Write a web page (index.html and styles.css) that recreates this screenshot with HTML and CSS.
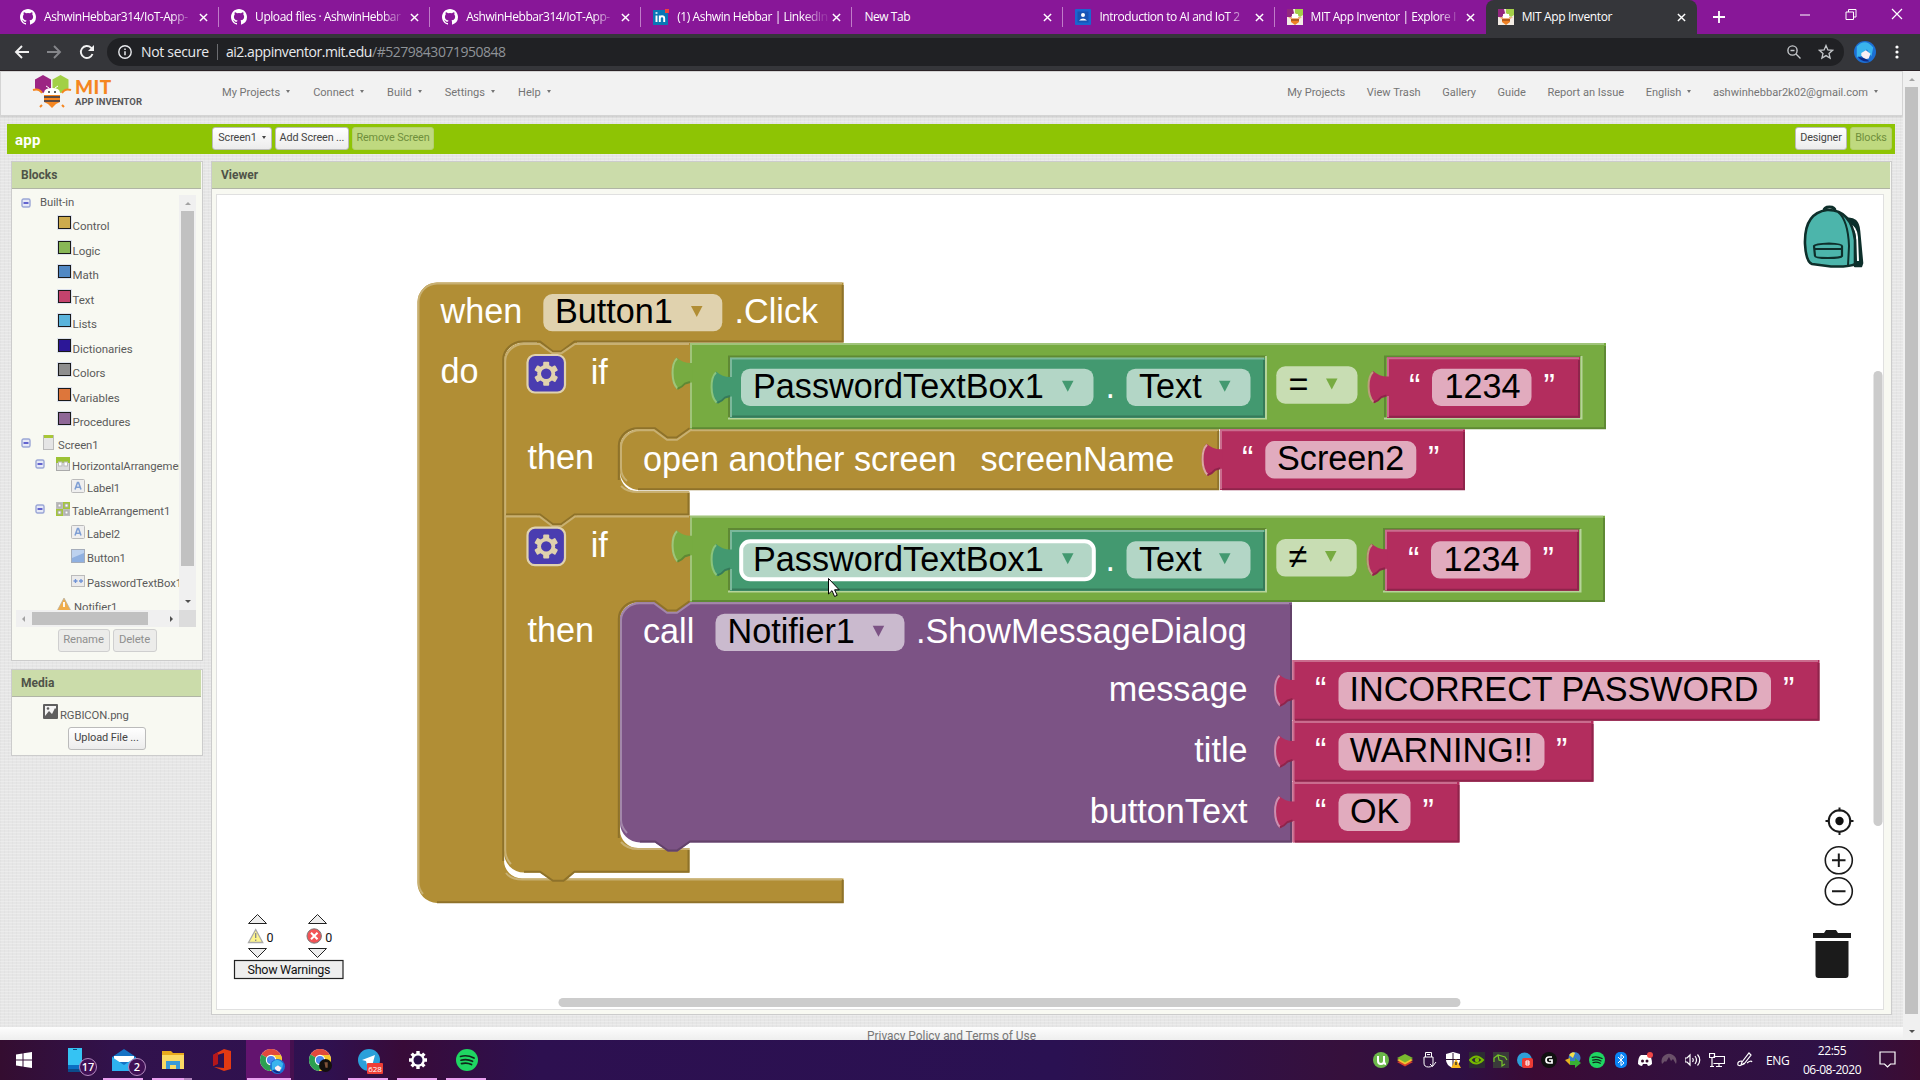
FILE: index.html
```html
<!DOCTYPE html>
<html lang="en">
<head>
<meta charset="utf-8">
<title>MIT App Inventor</title>
<link rel="stylesheet" href="styles.css">
</head>
<body>
<svg class="defs" aria-hidden="true">
  <defs>
    <symbol id="github" viewBox="0 0 16 16"><path fill="#fff" d="M8 0C3.58 0 0 3.58 0 8c0 3.54 2.29 6.53 5.47 7.59.4.07.55-.17.55-.38v-1.33c-2.22.48-2.7-1.07-2.7-1.07-.36-.92-.89-1.17-.89-1.17-.72-.5.06-.48.06-.48.8.05 1.23.82 1.23.82.71 1.22 1.87.87 2.33.66.07-.52.28-.87.5-1.07-1.77-.2-3.63-.89-3.63-3.95 0-.87.31-1.59.82-2.15-.08-.2-.36-1.02.08-2.12 0 0 .67-.21 2.2.82a7.6 7.6 0 0 1 4 0c1.53-1.04 2.2-.82 2.2-.82.44 1.1.16 1.92.08 2.12.51.56.82 1.27.82 2.15 0 3.07-1.87 3.75-3.65 3.95.29.25.54.73.54 1.48v2.19c0 .21.15.46.55.38A8 8 0 0 0 16 8c0-4.42-3.58-8-8-8z"/></symbol>
    <symbol id="cross" viewBox="0 0 10 10"><path d="M1 1l8 8M9 1l-8 8" stroke="#fff" stroke-width="1.6"/></symbol>
    <symbol id="beefav" viewBox="0 0 16 16"><rect width="16" height="16" fill="#f3ece4"/><path d="M0 0h6l1 4-3 4H0z" fill="#93277f"/><path d="M8 0h8v6l-3 2-5-4z" fill="#a3cf48"/><path d="M1 8h14l-4 3H5z" fill="#f0b080"/><path d="M5 5h6v4H5z" fill="#fff"/><path d="M4 10h8v3l-4 3-4-3z" fill="#ef8023"/><path d="M4 11h8" stroke="#7c3b16"/></symbol>
    <symbol id="minus" viewBox="0 0 10 10"><rect x="1" y="1" width="8" height="8" rx="1.5" fill="#e6e9f6" stroke="#9aa6d6" stroke-width="1.4"/><path d="M2.5 5h5" stroke="#1c1cb8" stroke-width="1.3"/></symbol>
    <symbol id="label" viewBox="0 0 14 14"><rect x=".5" y=".5" width="13" height="13" rx="1" fill="#efefef" stroke="#bbb"/><path d="M4 10.5L6.5 3.5h1L10 10.500M5 8.300h4" fill="none" stroke="#7f9fd4" stroke-width="1.6"/></symbol>
    <symbol id="chrome" viewBox="0 0 22 22"><circle cx="11" cy="11" r="11" fill="#e9e9e9"/><path d="M11 11L1.500 5.500A11 11 0 0 1 20.500 5.500z" fill="#e2493b"/><path d="M11 11L1.500 5.500A11 11 0 0 0 10 22l5-9z" fill="#2c9f51"/><path d="M11 6h9.800A11 11 0 0 1 10 22l5-9z" fill="#f8c72e"/><circle cx="11" cy="11" r="5.200" fill="#fff"/><circle cx="11" cy="11" r="4.100" fill="#4a86ee"/></symbol>
    <symbol id="spotify" viewBox="0 0 22 22"><circle cx="11" cy="11" r="11" fill="#1fd662"/><path d="M4.500 7.500Q11 5.500 18 9M5 11.200Q11 9.500 16.500 12.300M5.500 14.600Q11 13.200 15.500 15.500" fill="none" stroke="#10251a" stroke-width="1.700" stroke-linecap="round"/></symbol>
    <symbol id="anime" viewBox="0 0 24 24"><circle cx="12" cy="12" r="12" fill="#1c6fd4"/><path d="M3 6Q12-4 21 7L19 17 14 9 9 16 3 18z" fill="#39b4ee"/><path d="M8 13l5-3 5 4-2 5-4 1-4-4z" fill="#fbeff3"/><path d="M4 17q5 7 13 5l-5-3z" fill="#0e2a86"/></symbol>
    <path id="tab" d="M2.500 20H.5Q-7 20-13.500 14.500C-20 20-20 40-12.500 46.500Q-8 45-5 41L.5 39.500H2.500z"/>
    <path id="tabedge" d="M-13 15.500C-19 21-19 39-12.500 45.500" fill="none" stroke-width="2"/>
    <path id="tabdark" d="M-12.500 45.800Q-8 44.300-5 40.500L0 39" fill="none" stroke-width="2"/>
    <path id="arrow" d="M0 0h11.500L5.750 11z"/>
    <g id="gear"><rect x="1" y="1" width="37.500" height="37.500" rx="7.500" fill="#4a3db0" stroke="#e0d2ae" stroke-width="2.200"/><g transform="translate(19.700 19.700)" fill="#e0d2ae"><circle r="9"/><rect x="-3" y="-12" width="6" height="24" rx="1"/><rect x="-3" y="-12" width="6" height="24" rx="1" transform="rotate(60)"/><rect x="-3" y="-12" width="6" height="24" rx="1" transform="rotate(120)"/><circle r="5.200" fill="#4a3db0"/></g></g>
  </defs>
</svg>

<div class="tabstrip">
  <div class="tab"><svg class="fav"><use href="#github"/></svg><span class="title fade">AshwinHebbar314/IoT-App-</span><svg class="x"><use href="#cross"/></svg></div>
  <div class="tab"><svg class="fav"><use href="#github"/></svg><span class="title fade">Upload files · AshwinHebbar</span><svg class="x"><use href="#cross"/></svg></div>
  <div class="tab"><svg class="fav"><use href="#github"/></svg><span class="title fade">AshwinHebbar314/IoT-App-</span><svg class="x"><use href="#cross"/></svg></div>
  <div class="tab"><svg class="fav" viewBox="0 0 16 16"><rect y="1" width="15" height="15" fill="#0a77b5"/><path d="M3.500 6.500v6.500M3.500 3.200v1.600M6.800 13V6.500M6.800 9.500q0-2.200 2.200-2.200t2.200 2.200V13" fill="none" stroke="#fff" stroke-width="1.900"/><rect x="12" width="4" height="4" fill="#f0443c"/></svg><span class="title fade">(1) Ashwin Hebbar | LinkedIn</span><svg class="x"><use href="#cross"/></svg></div>
  <div class="tab"><span class="title">New Tab</span><svg class="x"><use href="#cross"/></svg></div>
  <div class="tab"><svg class="fav" viewBox="0 0 16 16"><rect width="16" height="16" rx="1" fill="#1a66d0"/><rect x="2.500" y="2.500" width="11" height="11" fill="#1853b4"/><circle cx="8" cy="6" r="2" fill="#fff"/><path d="M4 11.500q4-4 8 0z" fill="#fff"/></svg><span class="title fade">Introduction to AI and IoT 2</span><svg class="x"><use href="#cross"/></svg></div>
  <div class="tab last"><svg class="fav"><use href="#beefav"/></svg><span class="title fade">MIT App Inventor | Explore I</span><svg class="x"><use href="#cross"/></svg></div>
  <div class="tab active"><svg class="fav"><use href="#beefav"/></svg><span class="title">MIT App Inventor</span><svg class="x"><use href="#cross"/></svg></div>
  <svg class="newtab" viewBox="0 0 12 12"><path d="M6 0v12M0 6h12" stroke="#fff" stroke-width="1.800"/></svg>
  <div class="winbtns">
    <svg viewBox="0 0 12 12"><path d="M1 7h10" stroke="#fff"/></svg>
    <svg viewBox="0 0 12 12"><path d="M1 4h7.500v7.500H1zM3.500 4V1.500H11V9H8.500" fill="none" stroke="#fff"/></svg>
    <svg viewBox="0 0 12 12"><path d="M1 1l10 10M11 1L1 11" stroke="#fff" stroke-width="1.200"/></svg>
  </div>
</div>

<div class="toolbar">
  <svg class="nav" viewBox="0 0 16 16"><path d="M15 8H2M8 2L2 8l6 6" fill="none" stroke="#f1f1f1" stroke-width="1.900"/></svg>
  <svg class="nav" viewBox="0 0 16 16"><path d="M1 8h13M8 2l6 6-6 6" fill="none" stroke="#85868a" stroke-width="1.900"/></svg>
  <svg class="nav" viewBox="0 0 16 16"><path d="M13.500 10A6 6 0 1 1 12 3.600L14 6" fill="none" stroke="#f1f1f1" stroke-width="1.900"/><path d="M15 1v6H9z" fill="#f1f1f1"/></svg>
  <div class="omnibox">
    <svg class="info" viewBox="0 0 14 14"><circle cx="7" cy="7" r="6.200" fill="none" stroke="#e8eaed" stroke-width="1.400"/><path d="M7 6.200v4M7 3.500v1.500" stroke="#e8eaed" stroke-width="1.500"/></svg>
    <span class="secure">Not secure</span><i class="bar"></i><span class="url">ai2.appinventor.mit.edu<em>/#5279843071950848</em></span>
    <svg class="zoomi" viewBox="0 0 14 14"><circle cx="5.500" cy="5.500" r="4.600" fill="none" stroke="#c4c7ca" stroke-width="1.400"/><path d="M9 9l4.500 4.500M3.500 5.500h4" stroke="#c4c7ca" stroke-width="1.400"/></svg>
    <svg class="star" viewBox="0 0 16 16"><path d="M8 1.500l1.900 4.400 4.700.4-3.600 3.100 1.100 4.700L8 11.600l-4.100 2.500L5 9.400 1.400 6.300l4.700-.4z" fill="none" stroke="#c4c7ca" stroke-width="1.300"/></svg>
  </div>
  <svg class="avatar"><use href="#anime"/></svg>
  <svg class="dots" viewBox="0 0 4 16"><g fill="#fff"><circle cx="2" cy="3" r="1.600"/><circle cx="2" cy="8" r="1.600"/><circle cx="2" cy="13" r="1.600"/></g></svg>
</div>

<div class="view">
  <div class="page">
    <div class="header">
      <div class="logo">
        <svg viewBox="0 0 40 34"><path d="M11 0l8 4.500v9L11 18l-8-4.500v-9z" fill="#9c2583"/><path d="M28.500 0l8 4.500v9l-8 4.500-8-4.500v-9z" fill="#a2d046"/><path d="M1 15q6-2 9 3M39 15q-6-2-9 3M10 30l-2 2M30 30l2 2" fill="none" stroke="#f58620" stroke-width="2"/><path d="M12 18q0-5 8-5t8 5v3H12z" fill="#fff"/><path d="M12 20h16v7l-4 2-4 4-4-4-4-2z" fill="#f58620"/><path d="M12 22h16M12 26h16" stroke="#5d4b45" stroke-width="1.800"/><circle cx="17" cy="17" r="1" fill="#333"/><circle cx="23" cy="17" r="1" fill="#333"/><path d="M17 13l-3-2M23 13l3-2" stroke="#fff"/></svg>
        <div class="logotext"><b>MIT</b><span>APP INVENTOR</span></div>
      </div>
      <div class="menu">
        <span class="dd">My Projects</span><span class="dd">Connect</span><span class="dd">Build</span><span class="dd">Settings</span><span class="dd">Help</span>
      </div>
      <div class="menu right">
        <span>My Projects</span><span>View Trash</span><span>Gallery</span><span>Guide</span><span>Report an Issue</span><span class="dd">English</span><span class="dd">ashwinhebbar2k02@gmail.com</span>
      </div>
    </div>

    <div class="project">
      <b>app</b>
      <div class="btn dd w60">Screen1</div><div class="btn w74">Add Screen ...</div><div class="btn off w82">Remove Screen</div>
      <div class="grow"></div>
      <div class="btn w52">Designer</div><div class="btn off w42">Blocks</div>
    </div>

    <div class="main">
      <div class="side">
        <div class="panel blocks">
          <div class="phead">Blocks</div>
          <div class="treebox">
            <div class="tree">
              <div class="row top"><svg class="tg"><use href="#minus"/></svg><span>Built-in</span></div>
              <div class="row cat"><i class="c1"></i><span>Control</span></div>
              <div class="row cat"><i class="c2"></i><span>Logic</span></div>
              <div class="row cat"><i class="c3"></i><span>Math</span></div>
              <div class="row cat"><i class="c4"></i><span>Text</span></div>
              <div class="row cat"><i class="c5"></i><span>Lists</span></div>
              <div class="row cat"><i class="c6"></i><span>Dictionaries</span></div>
              <div class="row cat"><i class="c7"></i><span>Colors</span></div>
              <div class="row cat"><i class="c8"></i><span>Variables</span></div>
              <div class="row cat"><i class="c9"></i><span>Procedures</span></div>
              <div class="row scr"><svg class="tg"><use href="#minus"/></svg><svg class="ic s" viewBox="0 0 11 15"><rect x=".5" y=".5" width="10" height="14" fill="#e5e5e5" stroke="#bbb"/><rect x="1" y="0" width="9" height="3" fill="#a8c736"/></svg><span>Screen1</span></div>
              <div class="row arr"><svg class="tg"><use href="#minus"/></svg><svg class="ic" viewBox="0 0 14 14"><rect x=".5" y=".5" width="13" height="13" fill="#ddd" stroke="#aaa"/><rect width="14" height="6" fill="#9cc233"/><rect x="2.500" y="5" width="3.500" height="4" fill="#fff" stroke="#bbb"/><rect x="8" y="5" width="3.500" height="4" fill="#fff" stroke="#bbb"/></svg><span>HorizontalArrangement1</span></div>
              <div class="row leaf l1"><svg class="ic"><use href="#label"/></svg><span>Label1</span></div>
              <div class="row arr l2"><svg class="tg"><use href="#minus"/></svg><svg class="ic" viewBox="0 0 14 14"><rect width="14" height="14" fill="#bdbdbd"/><path d="M7 0h7v7H7zM0 7h7v7H0z" fill="#a5c63b"/><g fill="#fff" stroke="#aaa"><rect x="2" y="2" width="3" height="3"/><rect x="9" y="2" width="3" height="3"/><rect x="2" y="9" width="3" height="3"/><rect x="9" y="9" width="3" height="3"/></g></svg><span>TableArrangement1</span></div>
              <div class="row leaf l3"><svg class="ic"><use href="#label"/></svg><span>Label2</span></div>
              <div class="row leaf l4"><svg class="ic" viewBox="0 0 14 14"><rect x=".5" y=".5" width="13" height="13" fill="#8fb0e0" stroke="#a5adba"/><path d="M1 1h12v3L1 9z" fill="#bdd2ef"/></svg><span>Button1</span></div>
              <div class="row leaf l5"><svg class="ic p" viewBox="0 0 14 12"><rect x=".5" y=".5" width="13" height="11" fill="#ebebeb" stroke="#bbb"/><path d="M2.500 6h4M4.500 4v4M8 6h4M10 4v4" stroke="#6f93d6" stroke-width="1.300"/></svg><span>PasswordTextBox1</span></div>
              <div class="row note"><svg class="ic" viewBox="0 0 14 14"><path d="M7 0l7 13H0z" fill="#f0ad4a" stroke="#b9b1a2" stroke-width=".8"/><path d="M7 4v5" stroke="#fff" stroke-width="1.800"/></svg><span>Notifier1</span></div>
            </div>
            <div class="vs"><i class="up"></i><i class="thumb"></i><i class="down"></i></div>
            <div class="hs"><i class="lf"></i><i class="thumb"></i><i class="rt"></i></div>
            <div class="corner"></div>
          </div>
          <div class="acts"><div class="btn off w52">Rename</div><div class="btn off w44">Delete</div></div>
        </div>
        <div class="panel media">
          <div class="phead">Media</div>
          <div class="file"><svg viewBox="0 0 15 15"><rect width="15" height="15" rx="1" fill="#5f5f5f"/><path d="M2 2h11v11H2z" fill="#f4f4f4"/><path d="M2 12l4-5 3 3 3-6 1 1v8H2z" fill="#5f5f5f"/><circle cx="5" cy="4.500" r="1.300" fill="#5f5f5f"/></svg><span>RGBICON.png</span></div>
          <div class="btn w78">Upload File ...</div>
        </div>
      </div>

      <div class="panel viewer">
        <div class="phead">Viewer</div>
        <div class="workspace">
          <svg class="canvas" viewBox="217 195 1666 814" width="1666" height="814">
            <!-- event block -->
            <path fill="#b18e35" d="M417.500 302A20 19.500 0 0 1 437 282.500H843.500V342.500H577V354H537V342.500H524A20 18 0 0 0 504 361V860A18 18 0 0 0 522 878.500H843.500V903H437A20 20 0 0 1 417.500 883z"/>
            <path class="hi gl" d="M423 894Q418.500 889 418.500 882V302A19 18.500 0 0 1 437 283.500H842M506 873Q511 879.500 522 879.500H842"/>
            <path class="hi gd" d="M842.700 285V341.600H574.500L561 351.500H553L540 341.600H523A19.500 18 0 0 0 503.200 360V861M842.700 880V902.200H437"/>
            <!-- first if -->
            <path fill="#b18e35" d="M504 361A20 18 0 0 1 524 343H540L553 352.500H561L574.500 343H690V442H654V429H640A20 18 0 0 0 620 447V474A18 18 0 0 0 638 491.500H689.500V515.500H577V528H537V515.500H504z"/>
            <path class="hi gl" d="M505.200 515V361A19 17.500 0 0 1 524 344H539.500L552.500 353.200H561.500L575 344H689M621 486Q627 492 638 492H689"/>
            <path class="hi gd" d="M688.500 493V514.500H574.500L561 524.200H553L540 514.500H506M618.800 480V447A19 18 0 0 1 640 428.300H655L667.500 437.500H676.500L689.500 428.300"/>
            <!-- second if -->
            <path fill="#b18e35" d="M504 515.500H540L553 525.500H561L574.500 515.500H690V615H654V602H640A20 18 0 0 0 620 620V830A18 18 0 0 0 638 848H689.500V872.500H574.500L565 881.500H553L540 872.500H524A20 20 0 0 1 504 852z"/>
            <path class="hi gl" d="M511 864Q505.200 858 505.200 850V516.500H539.500L552.500 526.200H561.500L575 516.500H689M621 842Q627 849 638 849H689"/>
            <path class="hi gd" d="M688.500 850V871.700H574.500L563.500 880.700H553L540 871.700H524M618.800 838V620A19 18 0 0 1 640 601.300H655L667.500 610.500H676.500L689.500 601.300"/>

            <!-- open another screen -->
            <path fill="#b18e35" d="M620 447A20 18 0 0 1 640 429.300H654.500L667.500 439H676.500L690 429.300H1219V490H640A20 19 0 0 1 620 472z"/>
            <path class="hi gl" d="M627 481Q621 476 621 468V447A19 17 0 0 1 640 430.300H654L667 439.800H677L690.500 430.300H1218"/>
            <path class="hi gd" d="M1218.300 431V489.200H638"/>

            <!-- comparison 1 -->
            <g><path fill="#77ab41" d="M690 343H1606V429H690z"/>
            <path class="hi nl" d="M691 428V344H1604"/><path class="hi nd" d="M1605 346V428.200H692"/><use href="#tab" x="690" y="343" fill="#77ab41"/><use href="#tabedge" x="690" y="343" stroke="#a0c47a"/><use href="#tabdark" x="690" y="343" stroke="#5f8934"/></g>
            <g><path fill="none" stroke="#5f8934" stroke-width="2" d="M729 418V356.500H1266"/><path fill="none" stroke="#b6d49a" stroke-width="2" d="M728 418.500H1266V356"/>
            <rect x="730" y="358" width="535" height="60" fill="#439970"/><path class="hi tl" d="M731 417V358.500H1264"/><path class="hi td" d="M1264 360V416.500H732"/><use href="#tab" x="729.500" y="357" fill="#439970"/><use href="#tabedge" x="729" y="357" stroke="#8cc47c"/><use href="#tabdark" x="730" y="357" stroke="#367a5a"/></g>
            <rect class="f" x="741" y="368.700" width="352.500" height="37.300" rx="9"/><rect class="f" x="1126.500" y="368.700" width="124" height="37.300" rx="9"/><rect class="f" x="1276.300" y="366.300" width="81.200" height="37.400" rx="9"/>
            <g><path fill="none" stroke="#5f8934" stroke-width="2" d="M1385 418V356.500H1581"/><path fill="none" stroke="#b6d49a" stroke-width="2" d="M1384 418.500H1581.500V356"/>
            <rect x="1387" y="357" width="193" height="61" fill="#b32d5e"/><path class="hi rl" d="M1388 417V358.200H1579"/><path class="hi rd" d="M1579 360V416.800H1389"/><use href="#tab" x="1386.500" y="356.500" fill="#b32d5e"/><use href="#tabedge" x="1386" y="356.500" stroke="#b9a07a"/><use href="#tabdark" x="1386.500" y="356.500" stroke="#8f244b"/></g>
            <rect class="f" x="1432" y="368.700" width="99.500" height="37.300" rx="9"/>

            <!-- comparison 2 -->
            <g><path fill="#77ab41" d="M690 515.700H1605V602H690z"/>
            <path class="hi nl" d="M691 601V516.700H1603"/><path class="hi nd" d="M1604 518V601H692"/><use href="#tab" x="690" y="515.700" fill="#77ab41"/><use href="#tabedge" x="690" y="515.700" stroke="#a0c47a"/><use href="#tabdark" x="690" y="515.700" stroke="#5f8934"/></g>
            <g><path fill="none" stroke="#5f8934" stroke-width="2" d="M729 591V529H1266"/><path fill="none" stroke="#b6d49a" stroke-width="2" d="M728 591.500H1266V529"/>
            <rect x="730" y="530" width="535" height="61" fill="#439970"/><path class="hi tl" d="M731 590V531H1264"/><path class="hi td" d="M1264 532V589.500H732"/><use href="#tab" x="729.500" y="529.500" fill="#439970"/><use href="#tabedge" x="729" y="529.500" stroke="#8cc47c"/><use href="#tabdark" x="730" y="529.500" stroke="#367a5a"/></g>
            <rect class="f" x="741" y="541.300" width="352.500" height="37.300" rx="9"/><rect x="741.200" y="541.200" width="352.600" height="38" rx="9" fill="none" stroke="#fff" stroke-width="4"/><rect class="f" x="1126.500" y="541.300" width="124" height="37.300" rx="9"/><rect class="f" x="1276.300" y="539" width="80.400" height="37.600" rx="9"/>
            <g><path fill="none" stroke="#5f8934" stroke-width="2" d="M1384 591V529H1580"/><path fill="none" stroke="#b6d49a" stroke-width="2" d="M1383 591.500H1580.500V529"/>
            <rect x="1385" y="529.700" width="194" height="61" fill="#b32d5e"/><path class="hi rl" d="M1386 590V530.700H1578"/><path class="hi rd" d="M1578 532V589.700H1387"/><use href="#tab" x="1385" y="529.200" fill="#b32d5e"/><use href="#tabedge" x="1385" y="529.200" stroke="#b9a07a"/><use href="#tabdark" x="1385" y="529.200" stroke="#8f244b"/></g>
            <rect class="f" x="1431" y="541.300" width="99.500" height="37.300" rx="9"/>

            <!-- procedure call -->
            <path fill="#7c5385" d="M620 620A20 18 0 0 1 640 602.300H654.500L667.500 612H676.500L690 602.300H1292V842.500H690L677.500 851.500H668L655 842.500H640A20 20 0 0 1 620 823z"/>
            <path class="hi pl" d="M627 833Q621 827 621 820V620A19 17 0 0 1 640 603.300H654L667 612.800H677L690.500 603.300H1289"/>
            <path class="hi pd" d="M1291 605V841.500H690L677 850.500H668L655 841.500H640"/>
            <rect class="f" x="715.500" y="613.700" width="189" height="37.300" rx="9"/>

            <!-- text values -->
            <g><rect x="1220" y="429.300" width="245" height="60.700" fill="#b32d5e"/><path class="hi rl" d="M1221 489V430.300H1463"/><path class="hi rd" d="M1464 432V489.200H1222"/><use href="#tab" x="1220" y="429.300" fill="#b32d5e"/><use href="#tabedge" x="1220" y="429.300" stroke="#d8a9a0"/><use href="#tabdark" x="1220" y="429.300" stroke="#8f244b"/><rect class="f" x="1265.300" y="441" width="151" height="37.500" rx="9"/></g>
            <g><rect x="1292.500" y="660" width="527" height="60.700" fill="#b32d5e"/><path class="hi rl" d="M1293.500 720V661H1818"/><path class="hi rd" d="M1818.500 663V719.800H1295"/><use href="#tab" x="1292.500" y="660" fill="#b32d5e"/><use href="#tabedge" x="1292.500" y="660" stroke="#ca8fb0"/><use href="#tabdark" x="1292.500" y="660" stroke="#8f244b"/><rect class="f" x="1338.500" y="672" width="432.500" height="37.500" rx="9"/></g>
            <g><rect x="1292.500" y="721" width="301" height="60.700" fill="#b32d5e"/><path class="hi rl" d="M1293.500 781V722H1591"/><path class="hi rd" d="M1592.500 724V780.800H1295"/><use href="#tab" x="1292.500" y="721" fill="#b32d5e"/><use href="#tabedge" x="1292.500" y="721" stroke="#ca8fb0"/><use href="#tabdark" x="1292.500" y="721" stroke="#8f244b"/><rect class="f" x="1338.500" y="733" width="206" height="37.500" rx="9"/></g>
            <g><rect x="1292.500" y="782" width="167" height="60.500" fill="#b32d5e"/><path class="hi rl" d="M1293.500 842V783H1457"/><path class="hi rd" d="M1458.500 785V841.500H1295"/><use href="#tab" x="1292.500" y="781.500" fill="#b32d5e"/><use href="#tabedge" x="1292.500" y="781.500" stroke="#ca8fb0"/><use href="#tabdark" x="1292.500" y="781.500" stroke="#8f244b"/><rect class="f" x="1338.500" y="793.500" width="72" height="37.500" rx="9"/></g>
            <rect class="f" x="543.300" y="294" width="179" height="37.300" rx="9"/>

            <use href="#gear" x="526.500" y="354"/><use href="#gear" x="526.500" y="526.700"/>

            <g fill="#b18e35"><use href="#arrow" x="691" y="306"/></g>
            <g fill="#439970"><use href="#arrow" x="1062" y="380.700"/><use href="#arrow" x="1219" y="380.700"/><use href="#arrow" x="1062" y="553.300"/><use href="#arrow" x="1219" y="553.300"/></g>
            <g fill="#77ab41"><use href="#arrow" x="1326" y="378.500"/><use href="#arrow" x="1325" y="551"/></g>
            <g fill="#7c5385"><use href="#arrow" x="872.700" y="625.700"/></g>

            <g class="w">
              <text x="440.500" y="323">when</text><text x="734.500" y="323">.Click</text><text x="440.500" y="382.500">do</text>
              <text x="590.700" y="384">if</text><text x="527.500" y="469">then</text><text x="590.700" y="557">if</text><text x="527.500" y="641.700">then</text>
              <text x="643" y="470.500">open another screen</text><text x="980.500" y="470.500">screenName</text>
              <text x="1105.500" y="398">.</text><text x="1105.500" y="570.700">.</text>
              <text x="643" y="643.300">call</text><text x="916" y="643.300">.ShowMessageDialog</text>
              <g text-anchor="end"><text x="1247.500" y="701">message</text><text x="1247.500" y="762">title</text><text x="1247.500" y="822.500">buttonText</text></g>
              <text x="1409" y="398">“</text><text x="1543.500" y="398">”</text>
              <text x="1408" y="571">“</text><text x="1542.500" y="571">”</text>
              <text x="1242" y="470">“</text><text x="1428" y="470">”</text>
              <text x="1315" y="701">“</text><text x="1783" y="701">”</text>
              <text x="1315" y="762">“</text><text x="1556" y="762">”</text>
              <text x="1315" y="822.700">“</text><text x="1422.500" y="822.700">”</text>
            </g>
            <g class="k">
              <text x="555" y="323">Button1</text>
              <text x="753" y="398">PasswordTextBox1</text><text x="1139" y="398">Text</text><text x="1288.500" y="396">=</text><text x="1444.500" y="398">1234</text>
              <text x="753" y="570.700">PasswordTextBox1</text><text x="1139" y="570.700">Text</text><text x="1288.500" y="568">≠</text><text x="1443.500" y="570.700">1234</text>
              <text x="1277" y="470">Screen2</text><text x="727.500" y="643.300">Notifier1</text>
              <text x="1349.500" y="701">INCORRECT PASSWORD</text><text x="1349.800" y="762">WARNING!!</text><text x="1350" y="822.700">OK</text>
            </g>

            <!-- pointer -->
            <path d="M828.500 578.500v15.500l3.500-3.300 2.600 5.800 2.600-1.200-2.600-5.500h4.600z" fill="#fff" stroke="#000" stroke-width="1"/>

            <!-- backpack -->
            <g stroke="#0e2f2b" stroke-width="2.600" stroke-linejoin="round"><path d="M1846 219q12-2 13 12l3 32-1 3h-6l-3-38z" fill="#08302c"/><path d="M1850 225q6 2 7 12l1 24" fill="none" stroke="#fff" stroke-width="2"/><path d="M1824 211q0-4 5.500-4t5.500 4" fill="none" stroke-width="3"/><path d="M1812 264q-6-2-7-20-1-31 22-34 24-1 28 30l0 24q-4 3-24 2.500z" fill="#4cb5ab"/><path d="M1838 212q10 8 11 34l-1 20" fill="none" stroke-width="2"/><path d="M1814 246q1-2 15-2.500 13 .500 13 2.500v10q-1 2-14 2t-13-2zM1814 249h28" fill="none" stroke-width="2.200"/></g>
            <!-- zoom controls -->
            <g fill="none" stroke="#1a1a1a" stroke-width="2"><circle cx="1839.500" cy="821" r="10.800"/><path d="M1839.500 807.500v4M1839.500 831v4M1825.500 821h4M1849.500 821h4"/><circle cx="1839.500" cy="821" r="4.200" fill="#111" stroke="none"/><circle cx="1838.800" cy="860.300" r="13.500" stroke-width="1.600"/><circle cx="1838.800" cy="891.300" r="13.500" stroke-width="1.600"/><path d="M1832 860.300h13.500M1838.800 853.500V867M1832 891.300h13.500"/></g>
            <path d="M1813 938v-5h11l2-3h10l2 3h13v5zM1815.500 941H1848.500V975q0 3-3 3h-27q-3 0-3-3z" fill="#1b1b1b"/>
            <!-- workspace scrollbars -->
            <rect x="558.500" y="998" width="902" height="9" rx="4.500" fill="#ccc"/><rect x="1873.500" y="371" width="9" height="455" rx="4.500" fill="#ccc"/>
            <!-- warning indicator -->
            <g fill="#eee" stroke="#222"><path d="M248.500 923.500l9-9 9 9zM308.500 923.500l9-9 9 9zM248.500 948.500h18l-9 9zM308.500 948.500h18l-9 9z"/><rect x="234.500" y="960.500" width="108.500" height="18" stroke-width="1.200"/></g>
            <path d="M255.700 929.500l7 13h-14.200z" fill="#fdf58e" stroke="#aaa" stroke-width="1.300"/><path d="M255.700 933v5M255.700 939.500v1.500" stroke="#888" stroke-width="1.300"/>
            <circle cx="314.200" cy="936" r="7.200" fill="#f35457" stroke="#777"/><path d="M311 932.700l6.500 6.500M317.500 932.700l-6.500 6.500" stroke="#fff" stroke-width="2"/>
            <g class="wi"><text x="266.500" y="942">0</text><text x="325.300" y="942">0</text><text x="247.500" y="973.500" textLength="83">Show Warnings</text></g>
          </svg>
        </div>
      </div>
    </div>
    <div class="footer">Privacy Policy and Terms of Use</div>
  </div>
  <div class="pagescroll"><i class="up"></i><i class="thumb"></i><i class="down"></i></div>
</div>

<div class="taskbar">
  <div class="cell start"><svg viewBox="0 0 16 16" width="16" height="16"><path d="M0 2.500l6.500-1v6H0zM7.500 1.300L16 0v7.500H7.500zM0 8.500h6.500v6L0 13.600zM7.500 8.500H16V16l-8.500-1.200z" fill="#fff"/></svg></div>
  <div class="cell"><svg viewBox="0 0 14 24" width="14" height="24"><rect width="14" height="24" fill="#35c3f3"/><rect y="17" width="14" height="7" fill="#0a6fc2"/><rect y="21" width="14" height="3" fill="#0b4c8c"/><path d="M5 1.500h4" stroke="#0a4f80"/></svg><span class="badge">17</span></div>
  <div class="cell run"><svg viewBox="0 0 24 22" width="24" height="22"><path d="M0 8L12 0l12 8v14H0z" fill="#1572c4"/><path d="M2 7h20v6H2z" fill="#fff"/><path d="M0 8l12 8L24 8v14H0z" fill="#2eb2f0"/></svg><span class="badge">2</span></div>
  <div class="cell run multi"><svg viewBox="0 0 22 18" width="22" height="18"><path d="M0 0h9l2 2h11v16H0z" fill="#e9a91d"/><path d="M0 4h22v14H0z" fill="#fbd964"/><path d="M4 18v-8h14v8h-4v-4H8v4z" fill="#3b9ad9"/></svg></div>
  <div class="cell"><svg viewBox="0 0 18 22" width="18" height="22"><path d="M0 6l11-6 7 2v18l-7 2-10-4 10 1V4L4 6v9l-4 2z" fill="#e43a13"/><path d="M0 6l5-3v12l-5 2z" fill="#b5171c"/></svg></div>
  <div class="cell run on"><svg width="22" height="22"><use href="#chrome"/></svg><svg class="mini" width="15" height="15"><use href="#anime"/></svg></div>
  <div class="cell"><svg width="22" height="22"><use href="#chrome"/></svg><svg class="mini" width="13" height="13" viewBox="0 0 12 12"><circle cx="6" cy="6" r="6" fill="#14100e"/><path d="M5 3h3v5H6z" fill="#80533a"/></svg></div>
  <div class="cell run"><svg viewBox="0 0 22 22" width="22" height="22"><circle cx="11" cy="11" r="11" fill="#2ba0da"/><path d="M4 11l13-5-3 11-4-3-1 2-1-4z" fill="#fff"/></svg><span class="red">628</span></div>
  <div class="cell run"><svg viewBox="-10 -10 20 20" width="20" height="20"><g fill="#fff"><circle r="6.800"/><path d="M-1.700-9h3.400V9h-3.400zM-9-1.700H9v3.400H-9z"/><path d="M-1.700-9h3.400V9h-3.400zM-9-1.700H9v3.400H-9z" transform="rotate(45)"/></g><circle r="4.500" fill="#2b1048"/></svg></div>
  <div class="cell run"><svg width="22" height="22"><use href="#spotify"/></svg></div>
  <div class="tray">
    <div><svg viewBox="0 0 16 16"><circle cx="8" cy="8" r="8" fill="#6cb64a"/><path d="M5 4v5q0 3 3 3t3-3V4M11 9q0 3 2 3" fill="none" stroke="#fff" stroke-width="2"/></svg></div>
    <div><svg viewBox="0 0 16 16"><path d="M0 10l8 4.500 8-4.500-8-3z" fill="#d8402c"/><path d="M0 8l8 4.500L16 8 8 4z" fill="#f4c52e"/><path d="M0 6l8 4.500L16 6 8 2z" fill="#79b82f"/></svg></div>
    <div><svg viewBox="0 0 16 16"><path d="M4.500 5V.500h6V5M3 5h9v6q0 4-4.500 4T3 11zM6 2.500h3M9 12l2.500 2.500L15 10" fill="none" stroke="#fff"/></svg></div>
    <div><svg viewBox="0 0 16 16"><path d="M8 0l7 2v6q0 5-7 8-7-3-7-8V2z" fill="#fff"/><path d="M8 1v14M1 7.500h14" stroke="#2b1030"/><path d="M11 7l5 9H6z" fill="#f9b51d"/><path d="M11 10v3" stroke="#222" stroke-width="1.300"/></svg></div>
    <div><svg viewBox="0 0 16 16"><rect width="16" height="16" fill="#2c2c32"/><path d="M1 8q6-7 13 0-7 7-13 0z" fill="none" stroke="#76b900" stroke-width="2"/><circle cx="8" cy="8" r="2.200" fill="#76b900"/></svg></div>
    <div><svg viewBox="0 0 16 16"><rect width="16" height="16" fill="#3a3a3a"/><path d="M1 10V6l4-3 7 2 2 3M5 3l1 5 3 1v5l3-2" fill="none" stroke="#77c52b" stroke-width="1.200"/></svg></div>
    <div><svg viewBox="0 0 16 16"><circle cx="7.500" cy="8" r="7.500" fill="#2e9fd8"/><rect x="5" y="6" width="11" height="10" rx="2" fill="#eb3b34"/><path d="M9 9h3v4H9zM9 11h3" fill="none" stroke="#fff"/></svg></div>
    <div><svg viewBox="0 0 16 16"><circle cx="8" cy="8" r="8" fill="#111"/><path d="M11 5H8Q5 5 5 8t3 3h3V8H8" fill="none" stroke="#fff" stroke-width="1.700"/></svg></div>
    <div><svg viewBox="0 0 16 16"><circle cx="9.500" cy="6" r="6" fill="#3a7fc9"/><path d="M4 3Q7-1 10 1l-2 5z" fill="#f5e04a"/><path d="M5 9l5 0V6l6 5-6 5v-3H5z" fill="#38b034"/><path d="M0 8l5-2v7z" fill="#e5b51f"/></svg></div>
    <div><svg><use href="#spotify"/></svg></div>
    <div><svg viewBox="0 0 16 16"><rect x="2" width="12" height="16" rx="5" fill="#0a84f5"/><path d="M5 5l6 6-3 2.500v-11L11 5l-6 6" fill="none" stroke="#fff"/></svg></div>
    <div><svg viewBox="0 0 16 16"><path d="M1 12q0-7 3-9h8q3 2 3 9-2 2-4 2l-1-2H6l-1 2q-2 0-4-2z" fill="#fff"/><circle cx="5.500" cy="9" r="1.500" fill="#38102f"/><circle cx="10" cy="9" r="1.500" fill="#38102f"/><circle cx="13" cy="3" r="3" fill="#f04747"/></svg></div>
    <div><svg viewBox="0 0 16 16"><path d="M1 12A7.500 7.500 0 1 1 15 12l-3-5-2 2-2-4-3 5-1-1z" fill="#6a5069"/></svg></div>
    <div><svg viewBox="0 0 16 16"><path d="M0 6h2l3-3v10L2 10H0zM7.500 6q1.500 2 0 4M10 4q3 4 0 8M12.500 2.500q4.500 5.500 0 11" fill="none" stroke="#fff" stroke-width="1.200"/></svg></div>
    <div><svg viewBox="0 0 16 16"><path d="M4.500 4.500H15.500v7H4.500M7 14.500h6M10 12v2M.5 1.500h5v4H.5zM3 6v9M1 14.500h4" fill="none" stroke="#fff" stroke-width="1.200"/></svg></div>
    <div class="pen"><svg viewBox="0 0 16 16"><path d="M5 10l7-9 2 2-7 9-3 1zM5 9q-5 0-4 4 3 2 6-2M10 11q4-3 5-1" fill="none" stroke="#fff" stroke-width="1.200"/></svg></div>
  </div>
  <span class="lang">ENG</span>
  <div class="clock"><span>22:55</span><span>06-08-2020</span></div>
  <svg class="notif" viewBox="0 0 18 18"><path d="M1 1h15v12h-4.500l-3 3-3-3H1z" fill="none" stroke="#fff" stroke-width="1.200"/></svg>
</div>
</body>
</html>
```
FILE: styles.css
```css
* { box-sizing: border-box; }
body { margin: 0; width: 1920px; height: 1080px; overflow: hidden; display: flex; flex-direction: column; font-family: Roboto, "Liberation Sans", sans-serif; }
.defs { display: block; width: 0; height: 0; flex: none; }
svg { flex: none; }

/* browser tabs */
.tabstrip { height: 34px; flex: none; background: #881798; display: flex; padding-left: 8px; font-family: "Open Sans", "Noto Sans", sans-serif; font-size: 12px; letter-spacing: -0.45px; color: #fff; }
.tab { width: 211.1px; height: 34px; display: flex; align-items: center; padding: 0 11px 0 12px; position: relative; }
.tab::after { content: ""; position: absolute; right: 0; top: 7px; width: 1px; height: 20px; background: #c07cc8; }
.tab.last::after, .tab.active::after { display: none; }
.fav { width: 16px; height: 16px; margin-right: 8px; }
.title { flex: 1; white-space: nowrap; margin-right: 4px; padding-bottom: 1px; }
.fade { mask-image: linear-gradient(90deg, #000 84%, rgba(0,0,0,.15) 97%); }
.x { width: 9px; height: 9px; }
.tab.active { background: #35363a; border-radius: 8px 8px 0 0; letter-spacing: -0.38px; }
.newtab { width: 12px; height: 12px; margin: 11px 0 0 16px; }
.winbtns { margin-left: auto; display: flex; gap: 34px; padding: 8px 17px 0 0; }
.winbtns svg { width: 12px; height: 12px; }

.toolbar { height: 37px; flex: none; background: #35363a; border-bottom: 1px solid #2a2226; display: flex; align-items: center; padding-left: 14px; }
.nav { width: 16px; height: 16px; margin-right: 16.300px; }
.omnibox { width: 1737px; height: 28px; margin-left: -4px; border-radius: 14px; background: #202124; display: flex; align-items: center; padding: 0 10px 0 11px; font: 14px "Open Sans", "Noto Sans", sans-serif; letter-spacing: -0.3px; color: #e8eaed; }
.secure, .url { padding-bottom: 1px; }
.info { width: 14px; height: 14px; margin-right: 9px; }
.bar { width: 1px; height: 16px; margin: 0 8px 0 8px; background: #6b6c70; }
.url { flex: 1; letter-spacing: -0.45px; }
.url em { font-style: normal; color: #8f9398; letter-spacing: -0.48px; }
.zoomi { width: 14px; height: 14px; margin-right: 17px; }
.star { width: 16px; height: 16px; }
.avatar { width: 22px; height: 22px; margin-left: 10px; }
.dots { width: 4px; height: 16px; margin-left: 19px; }

/* page */
.view { height: 969px; flex: none; display: flex; }
.page { width: 1903px; height: 969px; overflow: hidden; display: flex; flex-direction: column; background-color: #e6e6e6; background-image: repeating-linear-gradient(0deg, rgba(255,255,255,.25) 0 1px, transparent 1px 3px), repeating-linear-gradient(90deg, rgba(120,120,120,.04) 0 1px, transparent 1px 4px); }
.header { height: 45px; flex: none; margin-bottom: 8px; background: #f2f2f2; border: 1px solid #d4d4d4; box-shadow: 0 1px 2px rgba(0,0,0,.12); display: flex; align-items: center; color: #757575; font-size: 11.050px; padding: 0 24px 0 31px; }
.logo { width: 190px; display: flex; gap: 3px; margin-top: -3px; }
.logo svg { width: 40px; height: 34px; }
.logotext { display: flex; flex-direction: column; padding-top: 3px; }
.logotext b { font: 900 19px/18px Lato, Roboto, sans-serif; letter-spacing: .4px; color: #f58620; }
.logotext span { font: 700 9.500px/12px Roboto, sans-serif; color: #58585a; white-space: nowrap; }
.menu { display: flex; gap: 23px; margin-top: -3px; white-space: nowrap; }
.menu.right { margin-left: auto; gap: 21.500px; }
.menu .dd::after, .btn.dd::after { content: ""; display: inline-block; margin-left: 5px; vertical-align: 2.500px; border: 2px solid transparent; border-top: 3px solid; border-bottom: 0; }
.menu .dd::after { margin-left: 6px; }

.project { width: 1888px; height: 30px; flex: none; margin-left: 7px; background: #8ec404; display: flex; align-items: flex-start; gap: 3px; padding: 3px; }
.project b { width: 199px; padding-left: 5px; color: #fff; font-size: 15px; line-height: 27px; letter-spacing: .3px; }
.grow { flex: 1; }
.btn { height: 23px; border: 1px solid #bbb; border-radius: 3px; background: linear-gradient(#fff, #ececec); color: #444; font-size: 10.800px; line-height: 20px; text-align: center; letter-spacing: -0.1px; white-space: nowrap; }
.btn.off { color: #8f8f8f; background: #ececea; border-color: #cfcfcf; }
.project .off { background: #bfd97f; border-color: #b4cf70; color: #6f8f3c; }
.w60 { width: 60px; } .w74 { width: 74px; } .w82 { width: 82px; } .w52 { width: 52px; } .w42 { width: 42px; } .w44 { width: 44px; } .w78 { width: 78px; }

.main { display: flex; gap: 8px; padding: 7px 0 0 11px; flex: none; }
.side { width: 192px; display: flex; flex-direction: column; gap: 8px; }
.panel { background: #f8f9f2; border: 1px solid #ccc; }
.phead { height: 27px; background: #cbdcaa; border-bottom: 1px solid #b0b5a5; color: #4f5348; font-size: 12px; font-weight: 700; line-height: 26px; padding-left: 9px; margin-right: 1px; }
.blocks { height: 500px; }
.treebox { width: 180px; height: 432px; margin: 6px 0 2px 4px; display: grid; grid-template: 415px 17px / 163px 17px; }
.tree { overflow: hidden; font-size: 11.500px; color: #5b5b5b; letter-spacing: -0.05px; white-space: nowrap; }
.row { display: flex; align-items: center; }
.tg { width: 10px; height: 10px; }
.row.top { height: 16.500px; padding-left: 4.500px; gap: 9.500px; font-size: 11.300px; }
.row.cat { height: 24.500px; padding-left: 41.500px; gap: 2px; }
.cat i { width: 13px; height: 13px; border: 1px solid #1a1a1a; outline: 1px solid #dde2ee; margin-bottom: 2px; }
.cat span { padding-top: 5px; }
.c1 { background: #cdab4d; } .c2 { background: #88b757; } .c3 { background: #5088c4; } .c4 { background: #c4436d; } .c5 { background: #5ab4dc; } .c6 { background: #2c1797; } .c7 { background: #8e8e8e; } .c8 { background: #dd763b; } .c9 { background: #8e6797; }
.ic { width: 14px; height: 14px; margin: 0 2px 0 0; }
.row span { line-height: 14px; }
.scr { height: 23px; padding: 4px 0 0 4.500px; font-size: 11.300px; }
.scr .tg { margin: -5px 12.500px 0 0; }
.scr .ic { width: 11px; height: 15px; margin: -7px 4px 0 0; }
.arr { height: 23px; padding-left: 19px; font-size: 11.300px; }
.arr .tg { margin: -5px 11px 0 0; }
.arr .ic, .leaf .ic { margin-top: -6px; }
.leaf { padding-left: 55px; height: 22px; font-size: 11.200px; }
.l2 { height: 23px; } .l3 { height: 23px; } .l4, .l5 { height: 25px; } .l4 .ic { margin-top: -5px; }
.ic.p { height: 12px; }
.note { height: 23px; padding-left: 41px; font-size: 11.300px; gap: 1px; }
.note .ic { margin-top: -6px; }
.vs, .hs, .pagescroll { background: #f0f0f0; display: flex; align-items: center; }
.vs { flex-direction: column; }
.vs .thumb { width: 13px; height: 355px; background: #c1c1c1; }
.hs .thumb { width: 116px; height: 13px; background: #c1c1c1; }
.corner { background: #dcdcdc; }
.up, .down, .lf, .rt { width: 0; height: 0; border: 3.500px solid transparent; }
.up { border-bottom-color: #a3a3a3; border-top: 0; margin: 7px 0 6px; }
.down { border-top-color: #505050; border-bottom: 0; margin-top: auto; margin-bottom: 7px; }
.lf { border-right-color: #a3a3a3; border-left: 0; margin: 0 7px 0 6px; }
.rt { border-left-color: #505050; border-right: 0; margin-left: auto; margin-right: 6px; }
.acts { display: flex; gap: 3px; padding-left: 45.500px; }
.acts .btn { font-size: 11.300px; }
.media { height: 87px; }
.media .btn { margin-left: 55.500px; font-size: 11px; }
.file { display: flex; align-items: center; height: 30px; gap: 2.500px; padding-left: 30.500px; font-size: 11.300px; color: #5b5b5b; }
.file svg { width: 15px; height: 15px; margin-top: -1px; }
.file span { padding-top: 6px; letter-spacing: -0.1px; }
.viewer { width: 1681px; height: 854px; }
.workspace { width: 1668px; height: 816px; margin: 5px 0 0 4px; background: #fff; border: 1px solid #e0e0e0; }
.canvas { display: block; font: 34.200px "Liberation Sans", Arial, sans-serif; }
.w { fill: #fff; } .k { fill: #000; }
.f { fill: #fff; fill-opacity: .6; }
.hi { fill: none; stroke-width: 2; }
.gl { stroke: #c8b072; } .gd { stroke: #8e722a; }
.nl { stroke: #a0c47a; } .nd { stroke: #5f8934; }
.tl { stroke: #7bb89b; } .td { stroke: #367a5a; }
.rl { stroke: #ca6c8e; } .rd { stroke: #8f244b; }
.pl { stroke: #a387aa; } .pd { stroke: #63426a; }
.wi { font: 12.500px Roboto, sans-serif; fill: #111; }
.footer { height: 14px; flex: none; margin-top: 12px; background: linear-gradient(#fdfdfd, #ededed); color: #777; font-size: 11.900px; line-height: 19px; text-align: center; white-space: nowrap; }
.pagescroll { width: 17px; flex-direction: column; }
.pagescroll .thumb { width: 13px; height: 927px; background: #c1c1c1; }

/* taskbar */
.taskbar { height: 40px; flex: none; display: flex; align-items: center; color: #fff; font-family: "Open Sans", "Noto Sans", sans-serif; background: linear-gradient(90deg, #340d30 0, #31124c 6%, #2f1150 17%, #380b38 21%, #2d1050 28%, #2a1152 55%, #36103c 70%, #2e1044 76%, #3a0a34 80%, #32103f 88%, #2e1146 95%, #3c0c32 100%); }
.cell { width: 49px; height: 40px; display: flex; align-items: center; justify-content: center; position: relative; flex: none; }
.cell.start { width: 50px; padding-right: 2px; }
.run::after { content: ""; position: absolute; left: 4px; bottom: 0; width: 40px; height: 2px; background: #e9a0f0; }
.multi::after { background: linear-gradient(90deg, #e9a0f0 80%, #b083bd 80%); }
.on { background: linear-gradient(90deg, #63146f 0 44px, #45104f 44px 48px, transparent 48px); }
.on::after { left: 1px; width: 44px; }
.badge { position: absolute; left: 29px; top: 18px; width: 18px; height: 18px; border: 1px solid #b58bc0; border-radius: 9px; background: #401055; font-size: 11px; font-weight: 600; line-height: 15px; text-align: center; }
.red { position: absolute; left: 23px; top: 23px; width: 16px; height: 11px; background: #ef3e36; font-size: 8px; line-height: 11px; text-align: center; border-radius: 1px; }
.mini { position: absolute; left: 24px; top: 19px; }
.tray { margin-left: 878px; display: flex; flex: none; }
.tray div { width: 24px; height: 16px; display: flex; justify-content: center; }
.tray svg { width: 16px; height: 16px; }
.tray .pen { width: 32px; }
.lang { font-size: 12px; margin-left: 5px; width: 26px; letter-spacing: -0.3px; }
.clock { width: 76px; margin-left: 2px; display: flex; flex-direction: column; align-items: center; font-size: 12px; line-height: 19px; letter-spacing: -0.45px; }
.notif { width: 18px; height: 18px; margin-left: 9px; }
```
